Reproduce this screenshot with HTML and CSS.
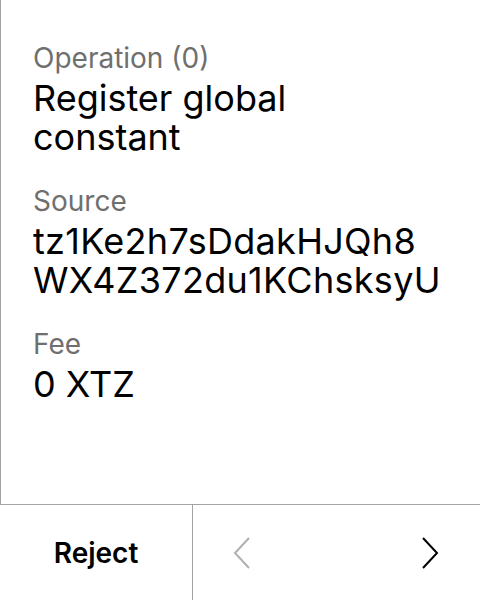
FILE: index.html
```html
<!DOCTYPE html>
<html>
<head>
<meta charset="utf-8">
<link rel="stylesheet" href="styles.css">
</head>
<body>
<div class="screen">
  <main class="content">
    <section class="field">
      <div class="label">Operation (0)</div>
      <div class="value">Register global constant</div>
    </section>
    <section class="field">
      <div class="label">Source</div>
      <div class="value"><span class="line">tz1Ke2h7sDdakHJQh8</span><span class="line">WX4Z372du1KChsksyU</span></div>
    </section>
    <section class="field">
      <div class="label">Fee</div>
      <div class="value">0 XTZ</div>
    </section>
  </main>
  <footer class="footer">
    <div class="reject">Reject</div>
    <nav class="nav">
      <span class="chev chev-prev">
        <svg width="18" height="32" viewBox="0 0 18 32"><path d="M16 1 L2 16 L16 31" fill="none" stroke="currentColor" stroke-width="2"/></svg>
      </span>
      <span class="chev chev-next">
        <svg width="18" height="32" viewBox="0 0 18 32"><path d="M2 1 L16 16 L2 31" fill="none" stroke="currentColor" stroke-width="2"/></svg>
      </span>
    </nav>
  </footer>
</div>
</body>
</html>
```

FILE: styles.css
```css
html, body {
  margin: 0;
  padding: 0;
  background: #fff;
}
body {
  font-family: Inter, "Noto Sans", sans-serif;
  color: #000;
}
.screen {
  width: 480px;
  height: 600px;
  display: flex;
  flex-direction: column;
}
.content {
  height: 504px;
  box-sizing: border-box;
  border-left: 1px solid #a3a3a3;
  padding: 40px 32px 0 32px;
  display: flex;
  flex-direction: column;
  gap: 26px;
}
.label {
  font-size: 28px;
  line-height: 36px;
  color: #6f6f6f;
}
.value {
  font-size: 36px;
  line-height: 39px;
  margin-top: 3px;
  max-width: 400px;
}
.line {
  display: block;
  white-space: nowrap;
  letter-spacing: 0.3px;
}
.footer {
  height: 96px;
  box-sizing: border-box;
  border-top: 1px solid #a3a3a3;
  display: flex;
}
.reject {
  width: 192px;
  border-right: 1px solid #a3a3a3;
  display: flex;
  align-items: center;
  justify-content: center;
  font-size: 28px;
  font-weight: 600;
}
.nav {
  flex: 1;
  display: flex;
  align-items: center;
  justify-content: space-between;
  padding: 0 41px 0 40px;
}
.chev {
  display: flex;
}
.chev-prev {
  color: #b0b0b0;
}
.chev-next {
  color: #000;
}
```
